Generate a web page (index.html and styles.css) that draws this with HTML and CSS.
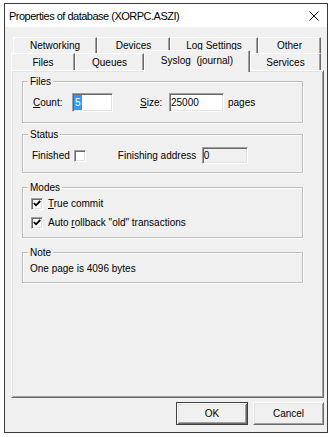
FILE: index.html
```html
<!DOCTYPE html>
<html lang="en">
<head>
    <meta charset="UTF-8">
    <title>Properties of database</title>
    <link rel="stylesheet" href="styles.css">
</head>
<body>
    <div class="window">
        <!-- Barre de titre -->
        <div class="titlebar">
            <span class="title">Properties of database (XORPC.ASZI)</span>
            <svg class="close" width="10" height="10" viewBox="0 0 10 10">
                <path d="M0.5 0.5 L9.5 9.5 M9.5 0.5 L0.5 9.5" stroke="#000" stroke-width="1" fill="none"/>
            </svg>
        </div>

        <div class="dialog">
            <!-- Onglets -->
            <div class="tab-row back">
                <div class="tab t-networking">Networking</div>
                <div class="tab t-devices">Devices</div>
                <div class="tab t-log">Log Settings</div>
                <div class="tab t-other">Other</div>
            </div>
            <div class="tab-row front">
                <div class="tab t-files">Files</div>
                <div class="tab t-queues">Queues</div>
                <div class="tab t-syslog selected">Syslog &nbsp;(journal)</div>
                <div class="tab t-services">Services</div>
            </div>

            <!-- Page de l'onglet -->
            <div class="pane">
                <div class="group group-files">
                    <div class="group-title">Files</div>
                    <div class="row row-files">
                        <span class="lbl-count"><u>C</u>ount:</span>
                        <div class="field f-count"><span class="sel">5</span></div>
                        <span class="lbl-size"><u>S</u>ize:</span>
                        <div class="field f-size">25000</div>
                        <span class="unit">pages</span>
                    </div>
                </div>

                <div class="group group-status">
                    <div class="group-title">Status</div>
                    <div class="row row-status">
                        <span class="lbl-finished">Finished</span>
                        <span class="check"></span>
                        <span class="lbl-addr">Finishing address</span>
                        <div class="field disabled f-addr">0</div>
                    </div>
                </div>

                <div class="group group-modes">
                    <div class="group-title">Modes</div>
                    <div class="row row-check">
                        <span class="check">
                            <svg width="8" height="7" viewBox="0 0 8 7"><path d="M0.8 3 L3 5.3 L7.2 1" stroke="#000" stroke-width="1.8" fill="none"/></svg>
                        </span>
                        <span class="check-label"><u>T</u>rue commit</span>
                    </div>
                    <div class="row row-check">
                        <span class="check">
                            <svg width="8" height="7" viewBox="0 0 8 7"><path d="M0.8 3 L3 5.3 L7.2 1" stroke="#000" stroke-width="1.8" fill="none"/></svg>
                        </span>
                        <span class="check-label">Auto <u>r</u>ollback "old" transactions</span>
                    </div>
                </div>

                <div class="group group-note">
                    <div class="group-title">Note</div>
                    <div class="note">One page is 4096 bytes</div>
                </div>
            </div>

            <!-- Boutons -->
            <div class="buttons">
                <button class="btn default">OK</button>
                <button class="btn">Cancel</button>
            </div>
        </div>
    </div>
</body>
</html>
```

FILE: styles.css
```css
/* Général */
body {
    margin: 0;
    background-color: #FFFFFF;
    font-family: "Liberation Sans", Arial, sans-serif;
    font-size: 10px;
    color: #000000;
}

/* Fenêtre */
.window {
    margin: 3px 0 0 4px;
    width: 324px;
    height: 430px;
    box-sizing: border-box;
    border: 1px solid #3A3A3A;
    background-color: #F0F0F0;
    display: flex;
    flex-direction: column;
}

.titlebar {
    height: 23px;
    background-color: #FFFFFF;
    display: flex;
    align-items: center;
    padding-left: 4px;
}

.title {
    flex: 1;
    font-size: 11px;
    letter-spacing: -0.5px;
}

.close {
    margin-right: 8px;
}

.dialog {
    flex: 1;
    padding: 10px 3px 0 6px;
}

/* Onglets */
.tab-row {
    display: flex;
}

.tab-row.back {
    height: 16px;
    margin-left: 2px;
}

.tab-row.front {
    height: 17px;
}

.tab {
    box-sizing: border-box;
    border-top: 1px solid #FFFFFF;
    border-left: 1px solid #FFFFFF;
    border-right: 1px solid #696969;
    box-shadow: inset -1px 0 #A0A0A0;
    display: flex;
    align-items: center;
    justify-content: center;
    background-color: #F0F0F0;
}

.t-networking { width: 84px; }
.t-devices { width: 73px; }
.t-log { width: 88px; }
.t-other { width: 63px; }
.t-files { width: 64px; }
.t-queues { width: 69px; }
.t-syslog { width: 106px; }
.t-services { width: 71px; }

.tab.selected {
    margin-top: -3px;
    margin-bottom: -2px;
    padding-bottom: 2px;
    position: relative;
    z-index: 1;
}

/* Page */
.pane {
    height: 328px;
    box-sizing: border-box;
    border: 1px solid;
    border-color: #FFFFFF #696969 #696969 #FFFFFF;
    box-shadow: inset 1px 1px #E3E3E3, inset -1px -1px #A0A0A0;
    padding: 1px;
}

/* Cadres */
.group {
    box-sizing: border-box;
    width: 281px;
    margin-left: 9px;
    border: 1px solid #BDBDBD;
    box-shadow: inset 1px 1px #FFFFFF, 1px 1px #FFFFFF;
    padding: 0 8px;
}

.group-files { margin-top: 9px; height: 42px; }
.group-status { margin-top: 11px; height: 39px; }
.group-modes { margin-top: 14px; height: 51px; }
.group-note { margin-top: 14px; height: 31px; }

.group-title {
    width: fit-content;
    margin: -7px 0 0 -3px;
    padding: 0 2px;
    line-height: 13px;
    background-color: #F0F0F0;
}

.row {
    display: flex;
    align-items: center;
}

.row-files {
    margin-top: 5px;
    height: 19px;
}

.lbl-count {
    width: 39px;
    margin-left: 2px;
}

.lbl-size {
    width: 29px;
    margin-left: 27px;
}

.unit {
    margin-left: 4px;
}

/* Champs */
.field {
    box-sizing: border-box;
    height: 19px;
    border: 1px solid;
    border-color: #A0A0A0 #FFFFFF #FFFFFF #A0A0A0;
    box-shadow: inset 1px 1px #696969, inset -1px -1px #E3E3E3;
    background-color: #FFFFFF;
    padding-left: 1px;
    display: flex;
    align-items: center;
}

.f-count { width: 41px; }
.f-size { width: 55px; }

.sel {
    background-color: #3399FF;
    color: #FFFFFF;
    line-height: 15px;
    padding: 0 1px;
}

.field.disabled {
    background-color: #F0F0F0;
    height: 17px;
}

.f-addr { width: 46px; }

.row-status {
    margin-top: 6px;
    height: 17px;
}

.lbl-finished {
    margin-left: 1px;
    margin-right: 4px;
}

.lbl-addr {
    width: 84px;
    margin-left: 32px;
}

/* Cases à cocher */
.check {
    box-sizing: border-box;
    width: 12px;
    height: 12px;
    border: 1px solid;
    border-color: #A0A0A0 #FFFFFF #FFFFFF #A0A0A0;
    box-shadow: inset 1px 1px #696969, inset -1px -1px #E3E3E3;
    background-color: #FFFFFF;
    display: flex;
    align-items: center;
    justify-content: center;
}

.row-check {
    height: 19px;
}

.row-check:first-of-type {
    margin-top: 1px;
}

.check-label {
    margin-left: 5px;
}

.note {
    margin-top: 3px;
    line-height: 13px;
    margin-left: -1px;
}

/* Boutons */
.buttons {
    display: flex;
    justify-content: flex-end;
    gap: 5px;
    margin-top: 4px;
}

.btn {
    box-sizing: border-box;
    width: 71px;
    height: 23px;
    margin: 0;
    padding: 0;
    font-family: "Liberation Sans", Arial, sans-serif;
    font-size: 10px;
    color: #000000;
    background-color: #F0F0F0;
    border: 1px solid;
    border-color: #FFFFFF #696969 #696969 #FFFFFF;
    box-shadow: inset 1px 1px #E3E3E3, inset -1px -1px #A0A0A0;
}

.btn.default {
    width: 72px;
    border-color: #404040;
    box-shadow: inset 1px 1px #FFFFFF, inset -1px -1px #696969, inset 2px 2px #E3E3E3, inset -2px -2px #A0A0A0;
}
```
